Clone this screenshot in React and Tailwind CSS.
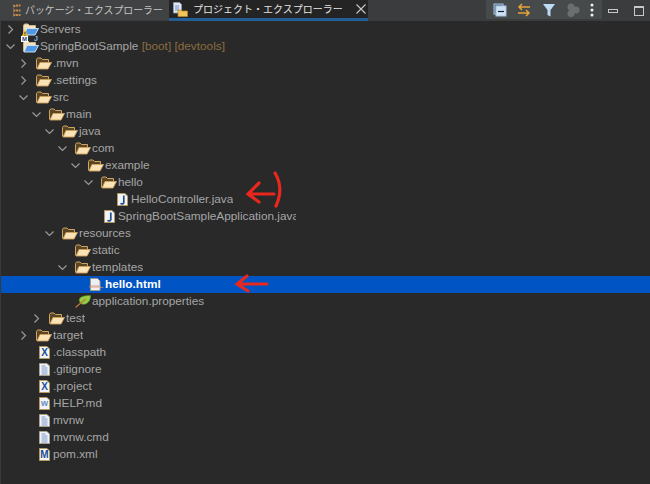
const rows = [
  { depth: 0, arrow: 'right', icon: 'server', label: 'Servers' },
  { depth: 0, arrow: 'down', icon: 'project', label: 'SpringBootSample', extra: '[boot] [devtools]' },
  { depth: 1, arrow: 'right', icon: 'folder', label: '.mvn' },
  { depth: 1, arrow: 'right', icon: 'folder', label: '.settings' },
  { depth: 1, arrow: 'down', icon: 'folder', label: 'src' },
  { depth: 2, arrow: 'down', icon: 'folder', label: 'main' },
  { depth: 3, arrow: 'down', icon: 'folder', label: 'java' },
  { depth: 4, arrow: 'down', icon: 'folder', label: 'com' },
  { depth: 5, arrow: 'down', icon: 'folder', label: 'example' },
  { depth: 6, arrow: 'down', icon: 'folder', label: 'hello' },
  { depth: 7, icon: 'java', label: 'HelloController.java' },
  { depth: 6, icon: 'java', label: 'SpringBootSampleApplication.java' },
  { depth: 3, arrow: 'down', icon: 'folder', label: 'resources' },
  { depth: 4, icon: 'folder', label: 'static' },
  { depth: 4, arrow: 'down', icon: 'folder', label: 'templates' },
  { depth: 5, icon: 'html', label: 'hello.html', selected: true },
  { depth: 4, icon: 'leaf', label: 'application.properties' },
  { depth: 2, arrow: 'right', icon: 'folder', label: 'test' },
  { depth: 1, arrow: 'right', icon: 'folder', label: 'target' },
  { depth: 1, icon: 'x', label: '.classpath' },
  { depth: 1, icon: 'text', label: '.gitignore' },
  { depth: 1, icon: 'x', label: '.project' },
  { depth: 1, icon: 'w', label: 'HELP.md' },
  { depth: 1, icon: 'text', label: 'mvnw' },
  { depth: 1, icon: 'text', label: 'mvnw.cmd' },
  { depth: 1, icon: 'm', label: 'pom.xml' },
];

function Chevron({ dir }) {
  return (
    <svg width="13" height="17" viewBox="0 0 13 17" fill="none" stroke="#9a9a9a" strokeWidth="1.2">
      {dir === 'right' ? <path d="M4.500 4.500l4 4-4 4" /> : <path d="M2.500 6.500l4 4 4-4" />}
    </svg>
  );
}

function Folder({ blue }) {
  return (
    <svg width="16" height="13" viewBox="0 0 16 13">
      <path d="M.5 11.500V2.500l1-1.500h3.500l1.500 1.500h6V5" fill={blue ? '#f4e3c0' : '#5a4524'} stroke={blue ? '#cdb78c' : '#d0a562'} strokeWidth="1" />
      <path d="M1 12l3-6.500h11.500l-3.500 6.500z" fill={blue ? '#4f98e6' : '#fae3b6'} stroke={blue ? '#d5e6f8' : '#cf9f5c'} strokeWidth="0.9" />
    </svg>
  );
}

function Page({ children, border = '#b59a5c' }) {
  return (
    <svg width="11" height="13" viewBox="0 0 11 13">
      <path d="M.5.500h7.500l2.500 2.500v9.500H.5z" fill="#f0f4fa" stroke={border} strokeWidth="1" />
      {children}
    </svg>
  );
}

function TreeIcon({ type }) {
  if (type === 'folder') return <Folder />;
  if (type === 'server') {
    return (
      <div className="relative w-[16px] h-[13px]">
        <Folder blue />
        <svg className="absolute left-[-2px] top-[6px]" width="8" height="8" viewBox="0 0 8 8">
          <path d="M4 .5L7.500 7.500H.5z" fill="#e8b93a" />
          <path d="M4 3v2.400M4 6v.8" stroke="#222" strokeWidth="0.8" />
        </svg>
      </div>
    );
  }
  if (type === 'project') {
    return (
      <div className="relative w-[16px] h-[13px]">
        <Folder blue />
        <span className="absolute left-[-2px] top-[-4px] bg-white text-[#1d3f7a] text-[6px] leading-[6px] font-bold px-px">M</span>
        <span className="absolute left-[11px] top-[-5px] text-[#8ab8ec] text-[7px] leading-[7px] font-bold">J</span>
      </div>
    );
  }
  if (type === 'java') {
    return (
      <Page>
        <path d="M6.800 2.500v7c0 1.500-2.200 1.700-3.300.8" fill="none" stroke="#1f4d8f" strokeWidth="1.700" />
      </Page>
    );
  }
  if (type === 'text') {
    return (
      <Page border="#a8a38a">
        <path d="M2.500 3h4M2.500 5h6M2.500 7h6M2.500 9h6M2.500 11h6" stroke="#6f8fc4" strokeWidth="0.9" />
      </Page>
    );
  }
  if (type === 'x' || type === 'w' || type === 'm') {
    return (
      <div className="relative w-[11px] h-[13px]">
        <Page />
        <span
          className={
            type === 'w'
              ? 'absolute inset-0 flex items-center justify-center text-[9px] text-[#6c8dbc] font-bold'
              : 'absolute inset-0 flex items-center justify-center text-[10px] text-[#1f4d8f] font-bold'
          }
        >
          {type === 'w' ? 'w' : type.toUpperCase()}
        </span>
      </div>
    );
  }
  if (type === 'html') {
    return (
      <svg width="16" height="13" viewBox="0 0 16 13">
        <path d="M2.500.5h7l2.500 2.500v9.500H2.500z" fill="#eceff3" stroke="#a39a8c" strokeWidth="1" />
        <path d="M1.500 8.500h10" stroke="#d0825c" strokeWidth="2.500" strokeDasharray="1 1" />
        <path d="M12 9.500h3.500" stroke="#c98a60" strokeWidth="0.8" />
      </svg>
    );
  }
  return (
    <svg width="16" height="13" viewBox="0 0 16 13">
      <path d="M4.500 3.500C7 .8 11.500.2 15.500.5c.3 4-2 8.300-6.500 8.800C6 9.600 3.500 7 4.500 3.500z" fill="#93cc45" stroke="#5c8f22" strokeWidth="0.6" />
      <path d="M.5 12.500L10.500 4" stroke="#c0763a" strokeWidth="1.200" />
    </svg>
  );
}

function TreeRow({ row }) {
  const isFile = ['java', 'text', 'x', 'w', 'm'].includes(row.icon);
  return (
    <div
      className={row.selected ? 'flex items-center h-[17px] bg-[#0054c3] text-white font-bold' : 'flex items-center h-[17px] text-[#a6a6a6]'}
      style={{ paddingLeft: 3 + row.depth * 13 }}
    >
      <div className="w-[13px] h-[17px] shrink-0">{row.arrow && <Chevron dir={row.arrow} />}</div>
      <div className={isFile ? 'w-[22px] h-[13px] shrink-0 flex justify-end items-center pr-[2px]' : 'w-[22px] h-[13px] shrink-0 flex justify-end items-center'}>
        <TreeIcon type={row.icon} />
      </div>
      <span className="whitespace-nowrap overflow-hidden pl-[1px]" style={{ maxWidth: 296 - (39 + row.depth * 13) }}>
        {row.label}
        {row.extra && <span className="text-[#8a6d3f]"> {row.extra}</span>}
      </span>
    </div>
  );
}

export default function App() {
  return (
    <div className="flex flex-col relative w-[650px] h-[484px] overflow-hidden bg-[#292929] font-['Liberation_Sans','Noto_Sans_CJK_JP',sans-serif] text-[11.800px] leading-[17px]">
      <div className="flex shrink-0 h-[21px] bg-[#3b3c3d]">
        <div className="flex items-center w-[169px] h-[20px] bg-[#414243] pl-[12px] gap-[4px] text-[#c4c4c4] text-[9.900px]">
          <svg width="9" height="13" viewBox="0 0 9 13" fill="none">
            <path d="M1.500 0v13" stroke="#77604a" />
            <path d="M4 1.500h4.500M4 6.500h4.500M4 11h4.500M1.500 2h3M1.500 6.500h3M1.500 11h3" stroke="#c08a4a" strokeWidth="2" strokeDasharray="2 .6" />
          </svg>
          <span className="whitespace-nowrap">パッケージ・エクスプローラー</span>
        </div>
        <div className="flex items-center w-[199px] bg-[#242424] pl-[4px] gap-[5px] text-[#e4e4e4] text-[10px] border-b-[3px] border-[#235f94]">
          <svg width="15" height="15" viewBox="0 0 15 15">
            <path d="M.5.5h6l2 2V11H.5z" fill="#dfe7f2" stroke="#8ea0bb" strokeWidth="0.8" />
            <path d="M2 4h4M2 6h4M2 8h4" stroke="#6f8fc4" />
            <path d="M5 8h3l1 1h5.500v5.500H5z" fill="#f2c558" stroke="#b5883a" strokeWidth="0.7" />
          </svg>
          <span className="whitespace-nowrap">プロジェクト・エクスプローラー</span>
          <svg className="ml-[8px]" width="10" height="10" viewBox="0 0 10 10" stroke="#c8c8c8" strokeWidth="1.100">
            <path d="M.5.500l9 9M9.500.500l-9 9" />
          </svg>
        </div>
        <div className="flex-1" />
        <div className="flex items-center justify-around w-[116px] h-[19px] bg-[#474a4b] px-[2px]">
          <svg width="14" height="14" viewBox="0 0 14 14">
            <rect x="1" y="1" width="9" height="10" fill="#5a6f8a" stroke="#a7c4e4" />
            <rect x="3" y="3" width="10" height="10" fill="#cfe0f2" stroke="#a7c4e4" />
            <path d="M5 8.500h6" stroke="#123" strokeWidth="1.200" />
          </svg>
          <svg width="16" height="16" viewBox="0 0 16 16" fill="none" stroke="#e5a43a" strokeWidth="1.500">
            <path d="M14 5H3M6 2L3 5l3 3M2 11h11M10 8l3 3-3 3" />
          </svg>
          <svg width="14" height="14" viewBox="0 0 14 14">
            <path d="M1 1h12L8.500 7v6.500l-3-1.500V7z" fill="#bcdcf5" />
          </svg>
          <svg width="14" height="14" viewBox="0 0 14 14" fill="#6b6f70">
            <circle cx="5" cy="4" r="3.500" />
            <circle cx="10" cy="7" r="3.500" />
            <circle cx="5" cy="10.500" r="3.500" />
          </svg>
          <svg width="6" height="14" viewBox="0 0 6 14" fill="#f2f2f2">
            <circle cx="3" cy="2" r="1.500" />
            <circle cx="3" cy="7" r="1.500" />
            <circle cx="3" cy="12" r="1.500" />
          </svg>
        </div>
        <div className="flex items-center gap-[16px] pl-[6px] w-[48px]">
          <div className="w-[10px] h-[4px] border border-[#c8c8c8]" />
          <div className="w-[10px] h-[10px] border border-[#c8c8c8] border-t-2" />
        </div>
      </div>
      <div className="flex-1 border-l border-[#3a3a3a]">
        {rows.map(row => (
          <TreeRow key={row.label + row.depth} row={row} />
        ))}
      </div>
      <svg className="absolute left-[240px] top-[170px]" width="50" height="40" viewBox="0 0 50 40" fill="none" stroke="#e8281e" strokeWidth="3.200" strokeLinecap="round">
        <path d="M9 24h25M19 13L8 24l11 8M35 3c6 10 6 22 1 33" />
      </svg>
      <svg className="absolute left-[230px] top-[272px]" width="45" height="24" viewBox="0 0 45 24" fill="none" stroke="#e8281e" strokeWidth="3.200" strokeLinecap="round">
        <path d="M7 12h30M17 4L7 12l11 7" />
      </svg>
    </div>
  );
}
